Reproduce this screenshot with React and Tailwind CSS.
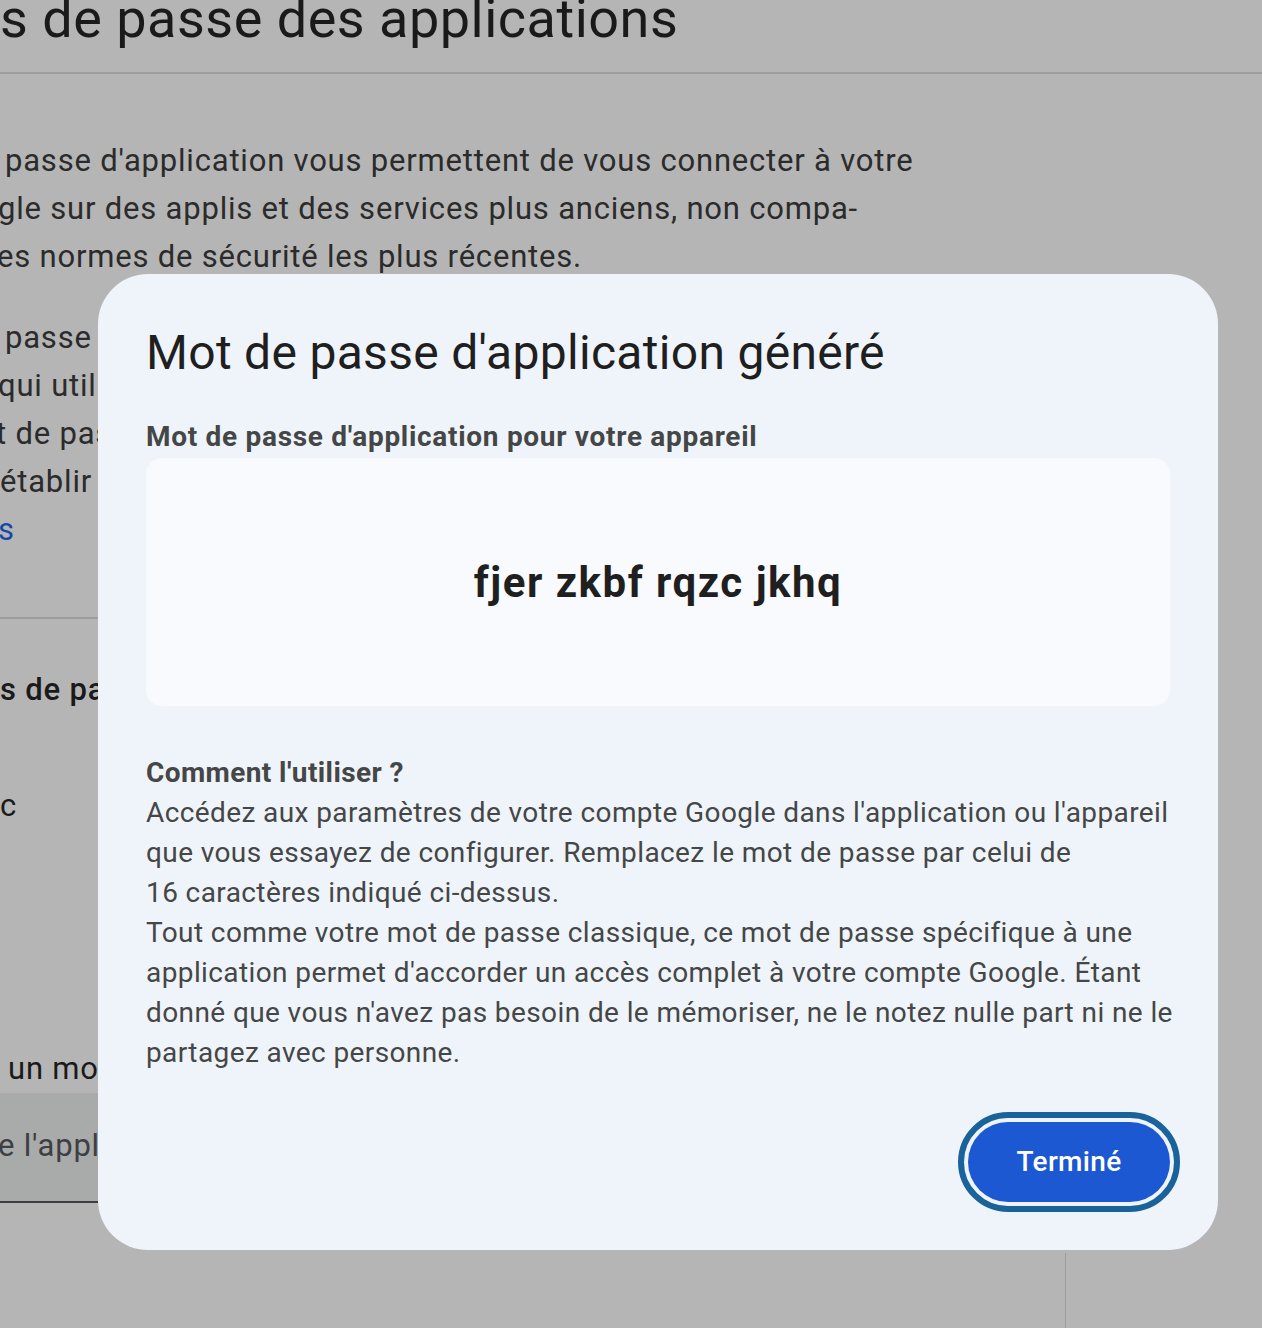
import React from "react";

const font = { fontFamily: "Roboto, 'Noto Sans', sans-serif" };

function BackgroundPage() {
  return (
    <div className="flex flex-col text-[#2b2b2b]">
      <div className="h-[74px] overflow-hidden border-b-2 border-[#9d9d9d]">
        <h1 className="-mt-[13px] whitespace-nowrap text-[54px] leading-[64px] tracking-[0.5px] text-[#1a1a1a]">
          s de passe des applications
        </h1>
      </div>

      <div className="mt-[63px] flex flex-col whitespace-nowrap text-[31px] leading-[48px] tracking-[0.8px]">
        <p className="ml-[5px]">passe d'application vous permettent de vous connecter à votre</p>
        <p className="-ml-[2px]">gle sur des applis et des services plus anciens, non compa-</p>
        <p className="-ml-[3px]">es normes de sécurité les plus récentes.</p>
      </div>

      <div className="mt-[33px] flex flex-col whitespace-nowrap text-[31px] leading-[48px] tracking-[0.8px]">
        <p className="ml-[5px]">passe</p>
        <p className="-ml-[2px]">qui utilisent</p>
        <p className="-ml-[4px]">t de passe</p>
        <p>établir</p>
        <p className="-ml-[2px] text-[#1449a8]">s</p>
      </div>

      <div className="mt-[63px] w-[98px] border-b-2 border-[#9d9d9d]" />

      <p className="mt-[47px] whitespace-nowrap text-[31px] font-medium leading-[48px] tracking-[0.8px] text-[#1a1a1a]">
        s de passe
      </p>

      <p className="mt-[68px] text-[31px] leading-[48px] text-[#1a1a1a]">c</p>

      <p className="ml-[8px] mt-[215px] whitespace-nowrap text-[31px] leading-[48px] tracking-[0.8px] text-[#1a1a1a]">
        un mot
      </p>

      <div className="flex h-[110px] w-[98px] items-center overflow-hidden whitespace-nowrap border-b-2 border-[#3c3e42] bg-[#a9aaaa] text-[31px] tracking-[0.8px] text-[#3d3f43]">
        <span className="-ml-[2px] -mt-[2px]">e l'application</span>
      </div>

      <div className="ml-[1065px] mt-[50px] h-[80px] w-px bg-[#9b9b9b]" />
    </div>
  );
}

function GeneratedPasswordDialog() {
  return (
    <div className="absolute left-[98px] top-[274px] flex w-[1120px] flex-col rounded-[50px] bg-[#eff4fb] px-[48px] pb-[48px] pt-[47px]">
      <h2 className="text-[48px] leading-[64px] tracking-[0.3px] text-[#1f1f1f]">Mot de passe d'application généré</h2>

      <p className="mt-[32px] text-[28px] font-bold leading-[40px] tracking-[0.7px] text-[#444746]">
        Mot de passe d'application pour votre appareil
      </p>
      <div className="mt-px flex h-[248px] items-center justify-center rounded-[16px] bg-[#f8fafd]">
        <span className="text-[42px] font-bold tracking-[1.5px] text-[#1f1f1f]">fjer zkbf rqzc jkhq</span>
      </div>

      <div className="mt-[47px] whitespace-nowrap text-[28px] leading-[40px] tracking-[0.4px] text-[#444746]">
        <p className="font-bold">Comment l'utiliser ?</p>
        <p>
          Accédez aux paramètres de votre compte Google dans l'application ou l'appareil
          <br />
          que vous essayez de configurer. Remplacez le mot de passe par celui de
          <br />
          16 caractères indiqué ci-dessus.
        </p>
        <p>
          Tout comme votre mot de passe classique, ce mot de passe spécifique à une
          <br />
          application permet d'accorder un accès complet à votre compte Google. Étant
          <br />
          donné que vous n'avez pas besoin de le mémoriser, ne le notez nulle part ni ne le
          <br />
          partagez avec personne.
        </p>
      </div>

      <div className="mt-[49px] flex justify-end">
        <button
          type="button"
          className="h-[80px] w-[202px] rounded-full bg-[#1c58d1] text-[28px] font-medium tracking-[0.3px] text-white outline-[6px] outline-offset-[4px] outline-[#19639a] outline-solid"
        >
          Terminé
        </button>
      </div>
    </div>
  );
}

export default function App() {
  return (
    <div className="relative h-[1328px] w-[1262px] overflow-hidden bg-[#b5b5b5]" style={font}>
      <BackgroundPage />
      <GeneratedPasswordDialog />
    </div>
  );
}
